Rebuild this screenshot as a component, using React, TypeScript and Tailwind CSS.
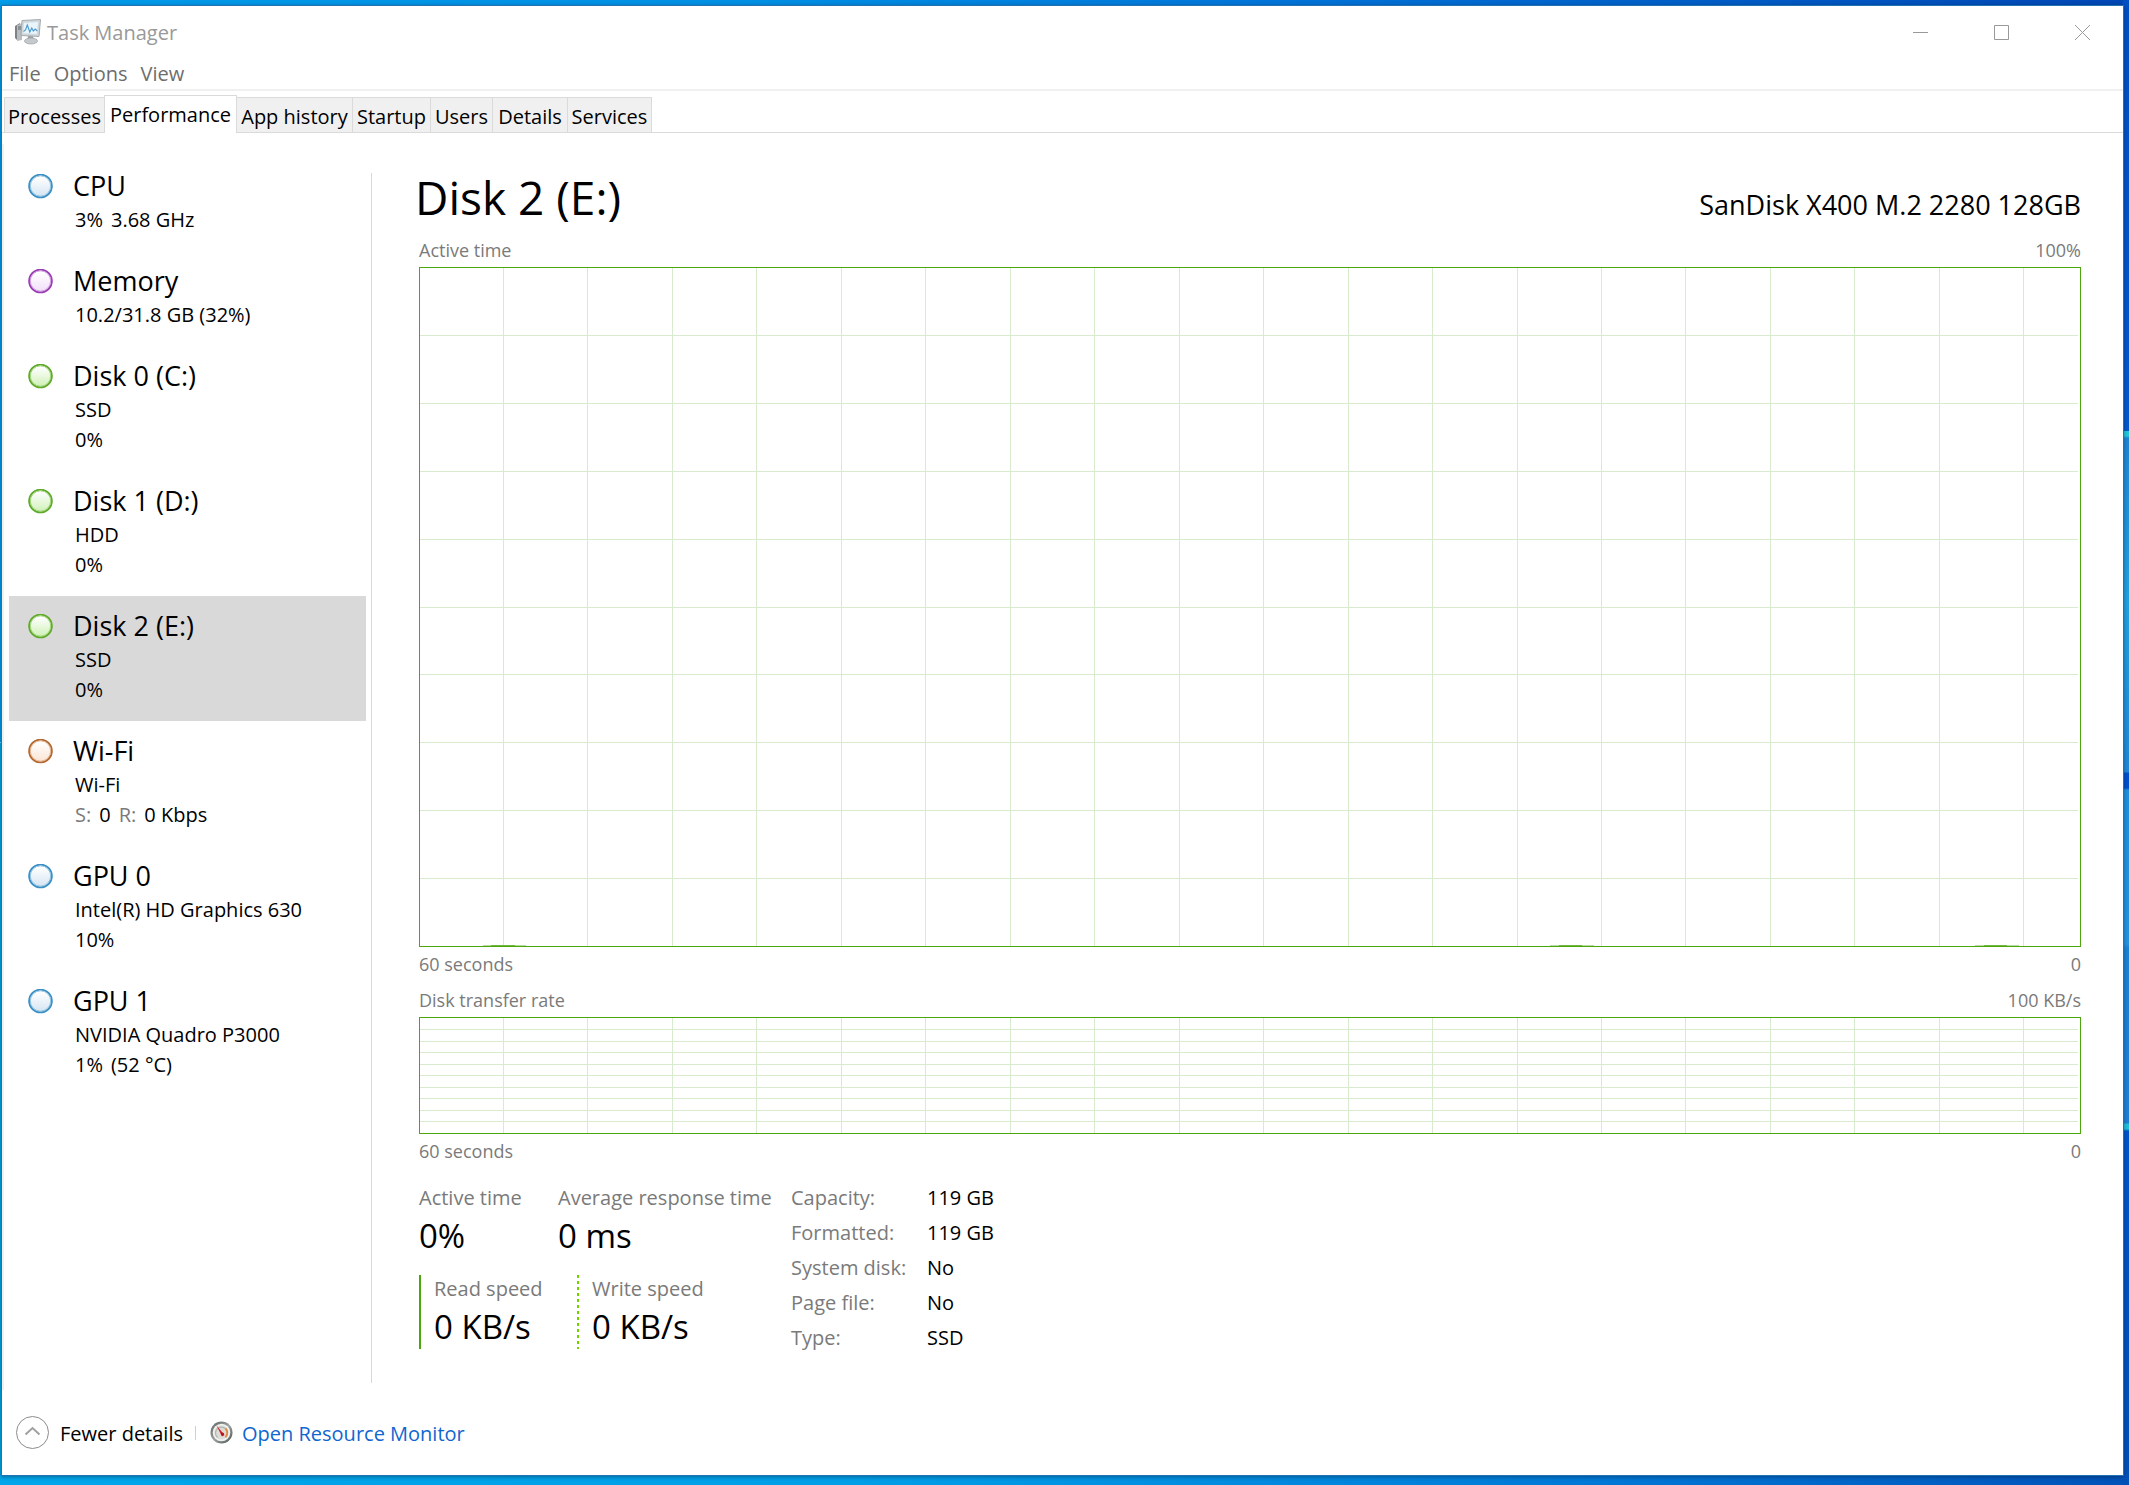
import type { ReactNode } from "react";

type Tone = "blue" | "purple" | "green" | "orange";

const tones: Record<Tone, { ring: string; glow: string; fill: string }> = {
  blue: { ring: "#3a8fc4", glow: "#8fc4e4", fill: "#d3e4f2" },
  purple: { ring: "#9a3cb4", glow: "#cf9be0", fill: "#f1def9" },
  green: { ring: "#5fa92b", glow: "#9fd676", fill: "#cdf0b4" },
  orange: { ring: "#b4672f", glow: "#e4b48e", fill: "#fbe3d2" },
};

const resources: { name: string; tone: Tone; lines: ReactNode[]; selected?: boolean }[] = [
  { name: "CPU", tone: "blue", lines: [<Parts items={["3%", "3.68 GHz"]} />] },
  { name: "Memory", tone: "purple", lines: ["10.2/31.8 GB (32%)"] },
  { name: "Disk 0 (C:)", tone: "green", lines: ["SSD", "0%"] },
  { name: "Disk 1 (D:)", tone: "green", lines: ["HDD", "0%"] },
  { name: "Disk 2 (E:)", tone: "green", lines: ["SSD", "0%"], selected: true },
  {
    name: "Wi-Fi",
    tone: "orange",
    lines: [
      "Wi-Fi",
      <Parts
        items={[
          <span className="text-[#7a7a7a]">S:</span>,
          "0",
          <span className="text-[#7a7a7a]">R:</span>,
          "0 Kbps",
        ]}
      />,
    ],
  },
  { name: "GPU 0", tone: "blue", lines: ["Intel(R) HD Graphics 630", "10%"] },
  { name: "GPU 1", tone: "blue", lines: ["NVIDIA Quadro P3000", <Parts items={["1%", "(52 °C)"]} />] },
];

const tabs = [
  { label: "Processes", width: "w-[100px]" },
  { label: "Performance", width: "w-[133px]", active: true },
  { label: "App history", width: "w-[116px]" },
  { label: "Startup", width: "w-[78px]" },
  { label: "Users", width: "w-[62px]" },
  { label: "Details", width: "w-[75px]" },
  { label: "Services", width: "w-[84px]" },
];

const details = [
  ["Capacity:", "119 GB"],
  ["Formatted:", "119 GB"],
  ["System disk:", "No"],
  ["Page file:", "No"],
  ["Type:", "SSD"],
];

function Parts({ items }: { items: ReactNode[] }) {
  return (
    <span className="flex gap-2">
      {items.map((item, i) => (
        <span key={i}>{item}</span>
      ))}
    </span>
  );
}

function Dot({ tone, id }: { tone: Tone; id: string }) {
  const t = tones[tone];
  return (
    <svg className="mt-[18px] size-[25px] shrink-0" viewBox="0 0 25 25" aria-hidden="true">
      <defs>
        <linearGradient id={id} x1="0" y1="0" x2="0" y2="1">
          <stop offset="0.1" stopColor="#ffffff" />
          <stop offset="1" stopColor={t.fill} />
        </linearGradient>
      </defs>
      <circle cx="12.5" cy="12" r="11.4" fill={`url(#${id})`} stroke={t.ring} strokeWidth="1.8" />
      <circle cx="12.5" cy="12" r="10.2" fill="none" stroke={t.glow} strokeWidth="1" />
    </svg>
  );
}

function MonitorIcon() {
  return (
    <svg className="size-7" viewBox="0 0 28 28" aria-hidden="true">
      <path d="M1 8 6 5v15l-3 2-2-2z" fill="#7d8284" />
      <path d="M3 7.500 8 5v17l-5 1z" fill="#b9bdbf" />
      <path d="M4 9h3M4 11h3" stroke="#5f6466" />
      <path d="M8 2.500 26.500 1.500 25 18.500 7 17.500z" fill="#d3d7d9" stroke="#a4aaad" />
      <path d="M9.500 4.500 24.500 3.500 23.300 16.500 8.800 15.500z" fill="#e9f4fb" stroke="#c3d3dd" strokeWidth="0.600" />
      <path d="m9.500 13.500 2-1.500 1.800-5 2.500 7 2-4 1.500 3 2-2 2 2" fill="none" stroke="#4a9bd0" strokeWidth="1.100" />
      <path d="m14 18 5 .3.500 3h-6z" fill="#9da2a5" />
      <ellipse cx="17" cy="23" rx="6.500" ry="3" fill="#c5c9cb" stroke="#9a9fa2" strokeWidth="0.700" />
    </svg>
  );
}

function GaugeIcon() {
  return (
    <svg className="size-[23px]" viewBox="0 0 23 23" aria-hidden="true">
      <defs>
        <linearGradient id="gauge-rim" x1="0" y1="0" x2="1" y2="1">
          <stop offset="0" stopColor="#5a6060" />
          <stop offset="0.500" stopColor="#9a9f9f" />
          <stop offset="1" stopColor="#4c5252" />
        </linearGradient>
      </defs>
      <circle cx="11.500" cy="11.500" r="11" fill="url(#gauge-rim)" />
      <circle cx="11.500" cy="11.500" r="8.800" fill="#f1f1ef" />
      <circle cx="11.500" cy="11.500" r="7" fill="#dcdcd8" />
      <path d="M7.500 16.500a6 6 0 1 1 8 0" fill="none" stroke="#b4b4b0" strokeWidth="1.200" />
      <path d="M15.500 7.500a6 6 0 0 1 0 8.500" fill="none" stroke="#e58a3c" strokeWidth="1.800" />
      <path d="m6.500 4.500 8 9.500-2.500 1.500z" fill="#d11f22" />
      <circle cx="12.500" cy="13" r="1.600" fill="#b01518" />
    </svg>
  );
}

const verticals = Array.from({ length: 19 }, (_, i) => `${(5.03 + i * 5.088).toFixed(2)}%`);
const horizontals = Array.from({ length: 9 }, (_, i) => `${(i + 1) * 10}%`);

function Graph({ label, bumps = [] }: { label: string; bumps?: number[] }) {
  return (
    <svg className="absolute inset-0 size-full" role="img" aria-label={label} shapeRendering="crispEdges">
      <g stroke="#d9ebcf">
        {verticals.map((x) => (
          <line key={x} x1={x} x2={x} y1="0" y2="100%" />
        ))}
        {horizontals.map((y) => (
          <line key={y} x1="0" x2="99.9%" y1={y} y2={y} />
        ))}
      </g>
      <g transform="translate(0 -1)">
        {bumps.map((x) => (
          <g key={x}>
            <rect x={`${x}%`} y="100%" width="2.6%" height="1" fill="#b7dba0" />
            <rect x={`${x + 0.5}%`} y="100%" width="1.4%" height="1" fill="#6fb73f" />
          </g>
        ))}
      </g>
    </svg>
  );
}

function Caption({ left, right }: { left: string; right: string }) {
  return (
    <div className="flex justify-between text-[18px] leading-6 text-[#7a7a7a]">
      <span>{left}</span>
      <span>{right}</span>
    </div>
  );
}

export default function App() {
  return (
    <div className="flex min-h-screen bg-[linear-gradient(to_bottom,#0050c4_0,#0558cf_431px,#22c8dc_431px,#22c8dc_436px,#1f86d8_438px,#22a2e2_600px,#2088da_772px,#0050d0_773px,#0050d0_788px,#1f90e0_790px,#2494e2_944px,#1b84d8_948px,#2080d8_1123px,#20c0dc_1124px,#20c0dc_1129px,#0055cc_1131px,#0050b8_100%),linear-gradient(to_right,#009be9_0%,#0090e4_35%,#0074d8_60%,#0046b4_100%),linear-gradient(to_right,#00a6ea_0%,#009fe8_40%,#0078d6_75%,#0052b8_100%)] bg-[size:6px_100%,100%_50%,100%_50%] bg-[position:right_top,left_top,left_bottom] bg-no-repeat pt-[5px] pr-[5px] pb-[9px] pl-px font-['Open_Sans','Noto_Sans',sans-serif] text-[20px] text-black">
      <div className="flex min-w-0 flex-1 flex-col border border-[#2272b4] bg-white shadow-[0_1px_4px_rgba(0,0,0,0.35)]">
        <header className="flex h-[52px] items-center justify-between">
          <div className="flex items-center gap-[5px] pl-3 text-[#999999]">
            <MonitorIcon />
            <h1 className="pt-px">Task Manager</h1>
          </div>
          <div className="flex h-full text-[#999999]">
            <button type="button" aria-label="Minimize" className="flex w-[81px] items-center justify-center">
              <svg className="size-[15px]" viewBox="0 0 15 15" stroke="currentColor"><path d="M0 7.500h15" /></svg>
            </button>
            <button type="button" aria-label="Maximize" className="flex w-[81px] items-center justify-center">
              <svg className="size-[15px]" viewBox="0 0 15 15" fill="none" stroke="currentColor"><path d="M.5.5h14v14H.5z" /></svg>
            </button>
            <button type="button" aria-label="Close" className="flex w-[81px] items-center justify-center">
              <svg className="size-[15px]" viewBox="0 0 15 15" stroke="currentColor"><path d="m0 0 15 15M15 0 0 15" /></svg>
            </button>
          </div>
        </header>

        <nav className="flex h-[33px] items-center gap-[13px] border-b-2 border-[#f0f0f0] pt-px pl-[7px] text-[#6d6d6d]">
          <button type="button">File</button>
          <button type="button">Options</button>
          <button type="button">View</button>
        </nav>

        <div role="tablist" className="flex h-[42px] items-end border-b border-[#dadada] pl-0.5">
          {tabs.map((tab, i) => (
            <button
              key={tab.label}
              type="button"
              role="tab"
              aria-selected={!!tab.active}
              className={
                tab.active
                  ? `${tab.width} -mb-px h-[38px] border-x border-t border-[#dadada] bg-white whitespace-nowrap`
                  : `${tab.width} h-[35px] border-t ${i === 0 ? "border-l" : "border-r"} border-[#dadada] bg-[#f0f0f0] pt-[3px] whitespace-nowrap`
              }
            >
              {tab.label}
            </button>
          ))}
        </div>

        <div className="mt-[11px] flex flex-1 border-l-2 border-[#f0f0f0]">
          <aside className="w-[367px] shrink-0 px-[5px] pt-3">
            {resources.map((r, i) => (
              <button
                key={r.name}
                type="button"
                aria-pressed={!!r.selected}
                className={`flex w-full gap-5 pl-[19px] text-left ${r.selected ? "bg-[#d9d9d9]" : ""}`}
              >
                <Dot tone={r.tone} id={`dot-${i}`} />
                <span className="pt-[11px] pb-4">
                  <span className="block pb-px text-[27px] leading-[37px]">{r.name}</span>
                  {r.lines.map((line, j) => (
                    <span key={j} className="block pl-0.5 leading-[30px]">
                      {line}
                    </span>
                  ))}
                </span>
              </button>
            ))}
          </aside>
          <div className="mt-[29px] mb-[7px] w-px shrink-0 bg-[#d9d9d9]" />

          <main className="flex min-w-0 flex-1 flex-col pt-[23px] pr-[42px] pb-[35px] pl-[47px]">
            <div className="flex items-baseline justify-between">
              <h2 className="-ml-1 text-[46px] leading-[60px]">Disk 2 (E:)</h2>
              <p className="text-[27px]">SanDisk X400 M.2 2280 128GB</p>
            </div>

            <div className="pt-[11px] pb-[5px]">
              <Caption left="Active time" right="100%" />
            </div>
            <div className="relative min-h-[200px] flex-1 border border-[#4ca60e]">
              <Graph label="Active time" bumps={[3.8, 68.1, 93.7]} />
            </div>
            <div className="pt-[5px] pb-3">
              <Caption left="60 seconds" right="0" />
            </div>

            <div className="pb-[5px]">
              <Caption left="Disk transfer rate" right="100 KB/s" />
            </div>
            <div className="relative h-[117px] border border-[#4ca60e]">
              <Graph label="Disk transfer rate" />
            </div>
            <div className="pt-[5px]">
              <Caption left="60 seconds" right="0" />
            </div>

            <div className="mt-[17px] flex">
              <div className="w-[372px]">
                <div className="flex">
                  <div className="w-[139px]">
                    <p className="leading-[35px] text-[#7a7a7a]">Active time</p>
                    <p className="text-[33px] leading-[42px]">0%</p>
                  </div>
                  <div>
                    <p className="leading-[35px] text-[#7a7a7a]">Average response time</p>
                    <p className="text-[33px] leading-[42px]">0 ms</p>
                  </div>
                </div>
                <div className="mt-[18px] flex">
                  <div className="flex w-[158px] gap-[13px]">
                    <div className="w-0.5 bg-[#4ca60e]" />
                    <div>
                      <p className="leading-[27px] text-[#7a7a7a]">Read speed</p>
                      <p className="pt-0.5 text-[33px] leading-[45px]">0 KB/s</p>
                    </div>
                  </div>
                  <div className="flex gap-[13px]">
                    <div className="w-0.5 bg-[repeating-linear-gradient(to_bottom,#74d100_0,#74d100_3px,transparent_3px,transparent_6px)]" />
                    <div>
                      <p className="leading-[27px] text-[#7a7a7a]">Write speed</p>
                      <p className="pt-0.5 text-[33px] leading-[45px]">0 KB/s</p>
                    </div>
                  </div>
                </div>
              </div>
              <dl className="leading-[35px]">
                {details.map(([term, value]) => (
                  <div key={term} className="flex">
                    <dt className="w-[136px] text-[#7a7a7a]">{term}</dt>
                    <dd>{value}</dd>
                  </div>
                ))}
              </dl>
            </div>
          </main>
        </div>

        <footer className="flex h-[85px] items-center pl-[14px]">
          <button type="button" className="flex items-center gap-[11px]">
            <svg className="size-[33px]" viewBox="0 0 33 33" fill="none" aria-hidden="true">
              <circle cx="16.500" cy="16.500" r="16" stroke="#8c8c8c" />
              <path d="m9.500 18.500 7-6.500 7 6.500" stroke="#a0a0a0" strokeWidth="2" />
            </svg>
            <span className="pt-0.5">Fewer details</span>
          </button>
          <div className="ml-3 h-[14px] w-px bg-[#d0d0d0]" />
          <a href="#resource-monitor" className="ml-[14px] flex items-center gap-[9px] text-[#0f66d0]">
            <GaugeIcon />
            <span className="pt-0.5">Open Resource Monitor</span>
          </a>
        </footer>
      </div>
    </div>
  );
}
